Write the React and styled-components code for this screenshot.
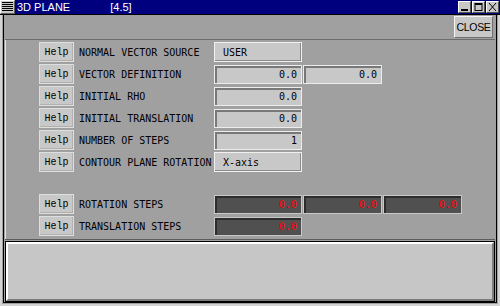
import styled, { createGlobalStyle } from "styled-components";

const GlobalStyle = createGlobalStyle`
	html, body {
		margin: 0;
		padding: 0;
		background: #a0a0a0;
	}
	* {
		box-sizing: border-box;
	}
`;

const Window = styled.div`
	width: 500px;
	height: 306px;
	display: flex;
	flex-direction: column;
	background: #a0a0a0;
	overflow: hidden;
`;

const TitleBar = styled.div`
	height: 15px;
	flex: none;
	display: flex;
	align-items: stretch;
	background: #00007f;
	border-bottom: 1px solid #000;
	font-family: "Liberation Sans", Arial, sans-serif;
	font-size: 11px;
	color: #fff;
`;

const MenuBox = styled.div`
	width: 15px;
	height: 14px;
	background: #c8c8c8;
	border: 1px solid;
	border-color: #fff #606060 #606060 #fff;
	display: flex;
	align-items: center;
	justify-content: center;
`;

const TitleText = styled.span`
	line-height: 14px;
	margin-left: ${(p) => p.$left}px;
`;

const Spacer = styled.div`
	flex: 1;
`;

const WinButton = styled.div`
	width: 13px;
	height: 12px;
	margin: 1px 1px 0 0;
	background: #c8c8c8;
	border: 1px solid;
	border-color: #fff #505050 #505050 #fff;
	display: flex;
	align-items: center;
	justify-content: center;
`;

const Outer = styled.div`
	flex: 1;
	display: flex;
	flex-direction: column;
	border: 2px solid #d4d4d4;
	border-top: 0;
	padding: 0 1px 1px;
`;

const Inner = styled.div`
	flex: 1;
	display: flex;
	flex-direction: column;
	border: 1px solid #000;
	border-top: 0;
`;

const TopBar = styled.div`
	height: 24px;
	flex: none;
	display: flex;
	justify-content: flex-end;
	align-items: center;
	padding-right: 3px;
`;

const CloseButton = styled.div`
	width: 39px;
	height: 22px;
	background: #c8c8c8;
	border: 1px solid;
	border-color: #f4f4f4 #707070 #707070 #f4f4f4;
	display: flex;
	align-items: center;
	justify-content: center;
	font-family: "Liberation Sans", Arial, sans-serif;
	font-size: 10.5px;
	letter-spacing: -0.3px;
	color: #000;
`;

const Panel = styled.div`
	height: 201px;
	flex: none;
	margin: 0 1px;
	padding: 2px 0 0 34px;
	border-top: 1px solid #6c6c6c;
	border-bottom: 1px solid #5c5c5c;
	box-shadow: inset 1px 0 0 #e4e4e4;
	display: flex;
	flex-direction: column;
	gap: 2px;
`;

const Row = styled.div`
	height: 20px;
	display: flex;
	align-items: center;
`;

const Gap = styled.div`
	height: 18px;
`;

const HelpButton = styled.div`
	width: 35px;
	height: 20px;
	background: #c8c8c8;
	border: 1px solid #dedede;
	box-shadow: inset -1px -1px 0 #b0b0b0;
	display: flex;
	align-items: center;
	justify-content: center;
	font-family: "Liberation Mono", "Courier New", monospace;
	font-size: 10px;
	color: #000;
`;

const Label = styled.div`
	width: 140px;
	padding-left: 5px;
	font-family: "DejaVu Sans Mono", monospace;
	font-size: 10px;
	color: #000;
	white-space: nowrap;
`;

const Fields = styled.div`
	display: flex;
	gap: 1px;
`;

const Choice = styled.div`
	width: 88px;
	height: 20px;
	padding-left: 8px;
	background: #c8c8c8;
	border: 1px solid #f0f0f0;
	box-shadow: inset -1px -1px 0 #8c8c8c;
	display: flex;
	align-items: center;
	font-family: "DejaVu Sans Mono", monospace;
	font-size: 10px;
	color: #000;
`;

const Field = styled.div`
	width: ${(p) => (p.$wide ? 88 : 79)}px;
	height: 19px;
	padding-right: 4px;
	background: ${(p) => (p.$dark ? "#505050" : "#c8c8c8")};
	border: 1px solid ${(p) => (p.$dark ? "#c8c8c8" : "#ececec")};
	box-shadow: inset 2px 2px 0 ${(p) => (p.$dark ? "#2c2c2c" : "#787878")};
	display: flex;
	align-items: center;
	justify-content: flex-end;
	font-family: "DejaVu Sans Mono", monospace;
	font-size: 10px;
	color: ${(p) => (p.$dark ? "#ff0000" : "#000")};
`;

const Message = styled.div`
	flex: 1;
	margin: 2px 2px 1px 2px;
	background: #c6c6c6;
	border: 2px solid;
	border-color: #fff #7c7c7c #7c7c7c #fff;
	box-shadow: 0 0 0 1px #000;
`;

const rows = [
	{ label: "NORMAL VECTOR SOURCE", choice: "USER" },
	{ label: "VECTOR DEFINITION", fields: ["0.0", "0.0"] },
	{ label: "INITIAL RHO", fields: ["0.0"] },
	{ label: "INITIAL TRANSLATION", fields: ["0.0"] },
	{ label: "NUMBER OF STEPS", fields: ["1"] },
	{ label: "CONTOUR PLANE ROTATION", choice: "X-axis" },
];

const stepRows = [
	{ label: "ROTATION STEPS", fields: ["0.0", "0.0", "0.0"] },
	{ label: "TRANSLATION STEPS", fields: ["0.0"] },
];

const MenuIcon = () => (
	<svg width="11" height="10" viewBox="0 0 11 10">
		{[0, 2, 4, 6, 8].map((y) => (
			<rect key={y} x="0" y={y} width="11" height="1" fill="#000" />
		))}
	</svg>
);

const MinIcon = () => (
	<svg width="9" height="8" viewBox="0 0 9 8">
		<rect x="1" y="6" width="7" height="2" fill="#000" />
	</svg>
);

const MaxIcon = () => (
	<svg width="9" height="8" viewBox="0 0 9 8">
		<rect x="1" y="0.5" width="7" height="7" fill="none" stroke="#000" />
		<rect x="1" y="0" width="7" height="2" fill="#000" />
	</svg>
);

const XIcon = () => (
	<svg width="9" height="8" viewBox="0 0 9 8">
		<path d="M1 0 L8 8 M8 0 L1 8" stroke="#000" strokeWidth="1" fill="none" />
	</svg>
);

const FormRow = ({ label, choice, fields, dark }) => (
	<Row>
		<HelpButton>Help</HelpButton>
		<Label>{label}</Label>
		{choice ? (
			<Choice>{choice}</Choice>
		) : (
			<Fields>
				{fields.map((value, i) => (
					<Field key={i} $wide={i === 0} $dark={dark}>
						{value}
					</Field>
				))}
			</Fields>
		)}
	</Row>
);

export default function App() {
	return (
		<>
			<GlobalStyle />
			<Window>
				<TitleBar>
					<MenuBox>
						<MenuIcon />
					</MenuBox>
					<TitleText $left={2}>3D PLANE</TitleText>
					<TitleText $left={40}>[4.5]</TitleText>
					<Spacer />
					<WinButton>
						<MinIcon />
					</WinButton>
					<WinButton>
						<MaxIcon />
					</WinButton>
					<WinButton>
						<XIcon />
					</WinButton>
				</TitleBar>
				<Outer>
					<Inner>
						<TopBar>
							<CloseButton>CLOSE</CloseButton>
						</TopBar>
						<Panel>
							{rows.map((row) => (
								<FormRow key={row.label} {...row} />
							))}
							<Gap />
							{stepRows.map((row) => (
								<FormRow key={row.label} {...row} dark />
							))}
						</Panel>
						<Message />
					</Inner>
				</Outer>
			</Window>
		</>
	);
}
